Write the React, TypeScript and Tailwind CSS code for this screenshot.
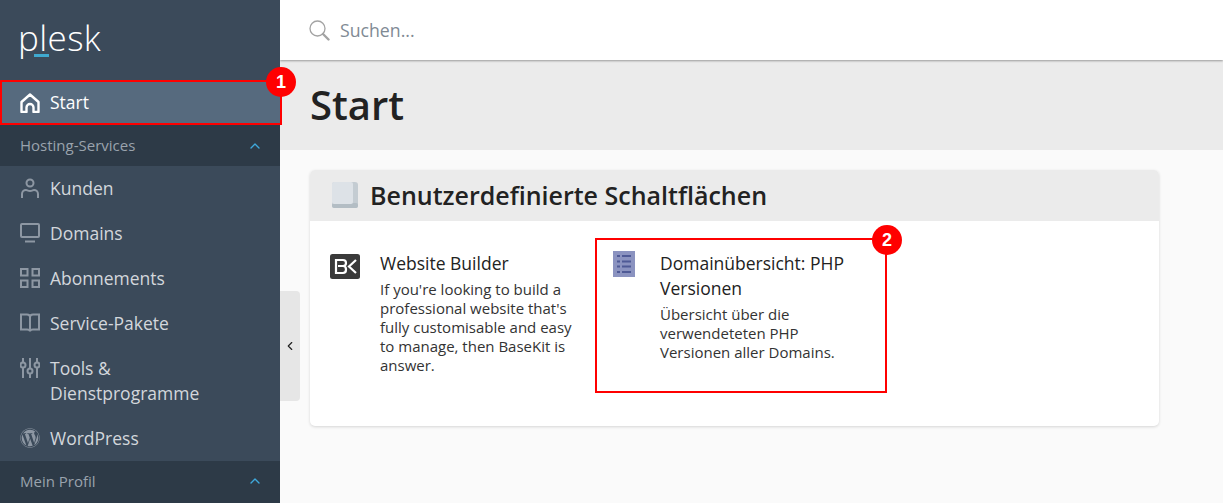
import { ChevronUp, ChevronLeft } from 'lucide-react';
import { FaWordpress } from 'react-icons/fa';
import type { ReactNode } from 'react';

const font = { fontFamily: '"Open Sans", "Liberation Sans", sans-serif' };

const HomeIcon = () => (
  <svg width="20" height="20" viewBox="0 0 20 20" fill="none" stroke="#fff" strokeWidth="2.400" strokeLinejoin="round">
    <path d="M1.500 9 10 1.500 18.500 9v10H13.500v-4.500a3.500 3.500 0 0 0-7 0V19H1.500z" />
  </svg>
);
const UserIcon = () => (
  <svg width="20" height="20" viewBox="0 0 20 20" fill="none" stroke="#8d97a3" strokeWidth="2">
    <circle cx="10" cy="5" r="3.500" />
    <path d="M2 20v-4c0-2.500 2-4 4-4 1 0 2 1 4 1s3-1 4-1c2 0 4 1.500 4 4v4" />
  </svg>
);
const MonitorIcon = () => (
  <svg width="20" height="20" viewBox="0 0 20 20" fill="none" stroke="#8d97a3" strokeWidth="2">
    <rect x="1" y="1" width="18" height="13" rx="1" />
    <path d="M5 18.500h10" />
  </svg>
);
const GridIcon = () => (
  <svg width="20" height="20" viewBox="0 0 20 20" fill="none" stroke="#8d97a3" strokeWidth="2">
    <rect x="1" y="1" width="6.500" height="6.500" />
    <rect x="12.500" y="1" width="6.500" height="6.500" />
    <rect x="1" y="12.500" width="6.500" height="6.500" />
    <rect x="12.500" y="12.500" width="6.500" height="6.500" />
  </svg>
);
const BookIcon = () => (
  <svg width="20" height="20" viewBox="0 0 20 20" fill="none" stroke="#8d97a3" strokeWidth="2">
    <path d="M1 1.500h6c2 0 3 1 3 2.500 0-1.500 1-2.500 3-2.500h6v15h-6c-2 0-3 .5-3 2 0-1.500-1-2-3-2H1zM10 4v14" />
  </svg>
);
const SlidersIcon = () => (
  <svg width="20" height="20" viewBox="0 0 20 20" fill="none" stroke="#8d97a3" strokeWidth="2">
    <path d="M3 0v4M3 10v10M10 0v10M10 16v4M17 0v4M17 10v10" />
    <circle cx="3" cy="7" r="2.500" />
    <circle cx="10" cy="13" r="2.500" />
    <circle cx="17" cy="7" r="2.500" />
  </svg>
);

function NavItem({ icon, label }: { icon: ReactNode; label: ReactNode }) {
  return (
    <div className="flex items-start px-5 py-[10px] text-[17.5px] leading-[25px] text-[#d3d7dc]">
      <span className="mr-[10px] mt-[2px] shrink-0">{icon}</span>
      <span>{label}</span>
    </div>
  );
}

function SectionHead({ label, h }: { label: string; h: string }) {
  return (
    <div className={`flex items-center justify-between bg-[#2d3a47] pl-5 pr-[17px] text-[15px] text-[#9aa3ad] ${h}`}>
      <span>{label}</span>
      <ChevronUp size={16} color="#3fa9dc" strokeWidth={2} />
    </div>
  );
}

function Badge({ n, className }: { n: string; className: string }) {
  return (
    <span
      className={`absolute flex h-[30px] w-[30px] items-center justify-center rounded-full bg-[#ff0000] font-['Liberation_Sans'] text-[18px] font-bold text-white ${className}`}
    >
      {n}
    </span>
  );
}

export default function App() {
  return (
    <div className="flex h-[503px] w-[1223px] overflow-hidden bg-[#fafafa]" style={font}>
      <aside className="relative z-10 flex w-[280px] shrink-0 flex-col bg-[#3b4a5a]">
        <div className="relative h-[80px] shrink-0">
          <span className="absolute left-[18px] top-[14px] text-[35px] font-light leading-[48px] tracking-[0.4px] text-white">
            plesk
          </span>
          <span className="absolute left-[34px] top-[54px] h-[3px] w-[15px] bg-[#3fa9cf]" />
        </div>
        <div className="flex h-[45px] w-[282px] shrink-0 items-center border-[2px] border-[#ff0000] bg-[#566a7e] pl-[18px] text-[17.5px] text-white">
          <span className="mr-[10px] flex"><HomeIcon /></span>
          Start
        </div>
        <SectionHead label="Hosting-Services" h="h-[41px] shrink-0" />
        <div className="shrink-0">
          <NavItem icon={<UserIcon />} label="Kunden" />
          <NavItem icon={<MonitorIcon />} label="Domains" />
          <NavItem icon={<GridIcon />} label="Abonnements" />
          <NavItem icon={<BookIcon />} label="Service-Pakete" />
          <NavItem icon={<SlidersIcon />} label={<>Tools &amp;<br />Dienstprogramme</>} />
          <NavItem icon={<FaWordpress size={20} color="#8d97a3" />} label="WordPress" />
        </div>
        <SectionHead label="Mein Profil" h="h-[42px] shrink-0 pb-[2px]" />
        <Badge n="1" className="left-[266px] top-[67px]" />
      </aside>

      <main className="relative flex min-w-0 flex-1 flex-col">
        <div className="z-[5] flex h-[60px] shrink-0 items-center bg-white pl-[29px] shadow-[0_1px_2px_rgba(0,0,0,0.35)]">
          <svg width="21" height="21" viewBox="0 0 21 21" fill="none" stroke="#a3a3a3">
            <circle cx="8.500" cy="8.500" r="7.500" strokeWidth="1.300" />
            <path d="M14 14l5.500 5.500" strokeWidth="2.400" strokeLinecap="round" />
          </svg>
          <span className="ml-[10px] text-[17.7px] text-[#808a94]">Suchen...</span>
        </div>
        <div className="flex h-[90px] shrink-0 items-center bg-[#ebebeb] pl-[30px]">
          <h1 className="text-[40px] font-semibold leading-[50px] text-[#222222]">Start</h1>
        </div>
        <div className="flex-1 pl-[30px] pr-[64px] pt-[20px]">
          <section className="h-[256px] overflow-hidden rounded-[5px] bg-white shadow-[0_1px_3px_rgba(0,0,0,0.15)]">
            <div className="flex h-[51px] items-center bg-[#ebebeb] pl-[22px]">
              <svg width="26" height="27" viewBox="0 0 26 27" className="mr-[12px]">
                <rect x="0" y="0" width="26" height="26" rx="3" fill="#c4ccd2" />
                <rect x="0" y="21" width="26" height="5" rx="2" fill="#b3bdc4" />
                <rect x="0" y="0" width="21" height="22" rx="2" fill="#dde2e7" />
              </svg>
              <h2 className="text-[25px] font-semibold text-[#222222]">Benutzerdefinierte Schaltflächen</h2>
            </div>
            <div className="flex pl-[20px] pt-[17px]">
              <div className="flex w-[265px] pt-[13px]">
                <svg width="30" height="25" viewBox="0 0 30 25" className="mr-[20px] mt-[3px] shrink-0">
                  <rect width="30" height="25" rx="2.500" fill="#3a3a3a" />
                  <path d="M6 6h7c2 0 3 1 3 3s-1 3-3 3c2 0 3 1 3 3.500S15 19 13 19H6zM8 12h5" fill="none" stroke="#fff" strokeWidth="2.200" />
                  <path d="M26 6l-7 6.500 7 6.500" fill="none" stroke="#fff" strokeWidth="2.200" />
                </svg>
                <div className="w-[200px]">
                  <div className="text-[17.5px] leading-[25px] text-[#222222]">Website Builder</div>
                  <p className="mt-[4px] text-[15px] leading-[19px] text-[#333333]">
                    If you're looking to build a professional website that's fully customisable and easy to manage, then BaseKit is answer.
                  </p>
                </div>
              </div>
              <div className="flex w-[292px] pl-[18px] pt-[13px]">
                <svg width="22" height="26" viewBox="0 0 22 26" className="mr-[25px] shrink-0">
                  <rect width="22" height="26" fill="#8b93c0" />
                  <path d="M4 5h3M9 5h9M4 10.500h3M9 10.500h9M4 15.500h3M9 15.500h9M4 21h3M9 21h9" stroke="#4f5a96" strokeWidth="2" />
                </svg>
                <div className="w-[200px]">
                  <div className="text-[17.5px] leading-[25px] text-[#222222]">Domainübersicht: PHP Versionen</div>
                  <p className="mt-[4px] text-[15px] leading-[19px] text-[#333333]">
                    Übersicht über die verwendeteten PHP Versionen aller Domains.
                  </p>
                </div>
              </div>
            </div>
          </section>
        </div>

        <button className="absolute left-0 top-[291px] flex h-[110px] w-[20px] items-center justify-center rounded-r-[4px] bg-[#e6e6e6] pr-[1px] text-[#222222]">
          <ChevronLeft size={14} strokeWidth={2} />
        </button>
        <div className="absolute left-[315px] top-[238px] h-[155px] w-[292px] border-[2px] border-[#ff0000]" />
        <Badge n="2" className="left-[592px] top-[225px]" />
      </main>
    </div>
  );
}
